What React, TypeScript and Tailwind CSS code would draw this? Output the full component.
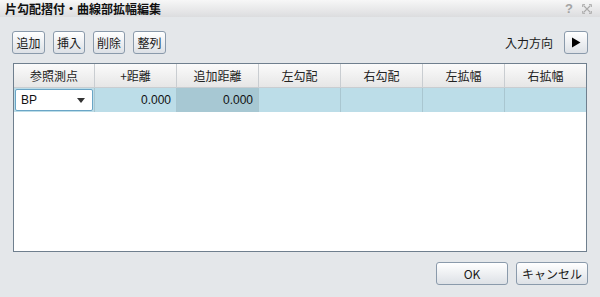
import React from "react";

const jp = { fontFamily: '"Noto Sans CJK JP", "Noto Sans", sans-serif' };
const lat = { fontFamily: '"Liberation Sans", "Noto Sans CJK JP", sans-serif' };

function Btn({ children, w }: { children: React.ReactNode; w: string }) {
  return (
    <div
      className={`${w} h-[23px] flex items-center justify-center rounded-[3px] border border-[#8a9aab] bg-gradient-to-b from-[#ffffff] to-[#dde1e6] text-[12px] text-[#1a1a1a] leading-none`}
      style={jp}
    >
      {children}
    </div>
  );
}

export default function App() {
  const headers = ["参照測点", "+距離", "追加距離", "左勾配", "右勾配", "左拡幅", "右拡幅"];
  return (
    <div className="w-[600px] h-[297px] bg-[#e4e7ea] flex flex-col overflow-hidden">
      <div className="h-[17px] flex items-center justify-between pl-[5px] pr-[8px] bg-gradient-to-b from-[#f7f7f7] to-[#dcdddf]">
        <span className="text-[12px] font-bold text-[#111] leading-none" style={jp}>
          片勾配摺付・曲線部拡幅編集
        </span>
        <div className="flex items-center gap-[9px]">
          <span className="text-[13px] text-[#a4a4a4] leading-none font-bold" style={lat}>?</span>
          <svg width="10" height="10" viewBox="0 0 10 10">
            <path d="M1.5 1.5 L8.5 8.5 M8.5 1.5 L1.5 8.5" stroke="#aaaaaa" strokeWidth="1.1" />
            <path d="M0.5 3 V0.5 H3 M7 0.5 H9.5 V3 M9.5 7 V9.5 H7 M3 9.5 H0.5 V7" stroke="#b4b4b4" fill="none" strokeWidth="1" />
          </svg>
        </div>
      </div>

      <div className="flex items-center justify-between pl-[12px] pr-[12px] mt-[14px] h-[23px]">
        <div className="flex gap-[8px]">
          <Btn w="w-[33px]">追加</Btn>
          <Btn w="w-[32px]">挿入</Btn>
          <Btn w="w-[32px]">削除</Btn>
          <Btn w="w-[33px]">整列</Btn>
        </div>
        <div className="flex items-center gap-[11px]">
          <span className="text-[12px] text-[#1a1a1a] leading-none" style={jp}>入力方向</span>
          <div className="w-[24px] h-[23px] flex items-center justify-center rounded-[3px] border border-[#8a9aab] bg-gradient-to-b from-[#ffffff] to-[#dde1e6]">
            <svg width="10" height="11" viewBox="0 0 10 11">
              <path d="M1 0.5 L9.5 5.5 L1 10.5 Z" fill="#000" />
            </svg>
          </div>
        </div>
      </div>

      <div className="mx-[13px] mt-[9px] h-[189px] border border-[#6f7f8e] bg-white flex flex-col">
        <div className="grid grid-cols-[81px_82px_82px_82px_82px_82px_81px] h-[24px]">
          {headers.map((h, i) => (
            <div
              key={h}
              className={`flex items-center justify-center bg-gradient-to-b from-[#fbfbfb] to-[#e6e6e6] border-b border-[#c9cdd1] text-[12px] text-[#222] leading-none ${i < 6 ? "border-r" : ""}`}
              style={jp}
            >
              {h}
            </div>
          ))}
        </div>
        <div className="grid grid-cols-[81px_82px_82px_82px_82px_82px_81px] h-[24px] bg-[#bcdde8]">
          <div className="border-r border-[#a9c6d0] p-[1px]">
            <div className="h-full bg-white border border-[#6aa5c6] rounded-[2px] flex items-center justify-between pl-[5px] pr-[7px]">
              <span className="text-[12px] text-[#111] leading-none" style={lat}>BP</span>
              <svg width="8" height="5" viewBox="0 0 8 5">
                <path d="M0 0 L8 0 L4 5 Z" fill="#333" />
              </svg>
            </div>
          </div>
          <div className="border-r border-[#a9c6d0] flex items-center justify-end pr-[5px] text-[12px] text-[#111] leading-none" style={lat}>
            0.000
          </div>
          <div className="border-r border-[#a9c6d0] bg-[#a7c8d3] flex items-center justify-end pr-[5px] text-[12px] text-[#111] leading-none" style={lat}>
            0.000
          </div>
          <div className="border-r border-[#a9c6d0]" />
          <div className="border-r border-[#a9c6d0]" />
          <div className="border-r border-[#a9c6d0]" />
          <div />
        </div>
      </div>

      <div className="flex justify-end gap-[8px] pr-[12px] mt-[10px]">
        <Btn w="w-[72px]">OK</Btn>
        <Btn w="w-[72px]">キャンセル</Btn>
      </div>
    </div>
  );
}
